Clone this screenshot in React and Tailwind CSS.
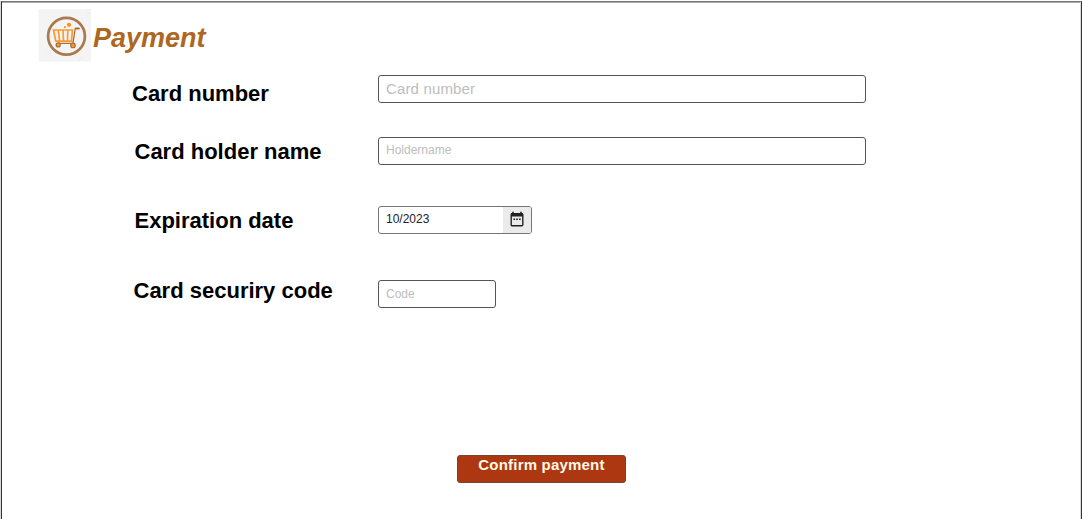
import React from "react";

function CartLogo() {
  return (
    <svg className="block h-[53px] w-[53px] shrink-0" viewBox="0 0 53 53" fill="none" aria-hidden="true">
      <rect x="0.5" width="52.5" height="52.5" fill="#f4f4f4" />
      <path d="M49 6l3-3M9 45l4-4M40 52l4-4M4 12l1-1" stroke="#ebebeb" />
      <circle cx="28.5" cy="27.2" r="18.4" stroke="#aa7a4e" strokeWidth="2.7" />
      <path d="M15.5 21H34.4L33.5 32.2H17.8L15.5 21ZM20.3 21L21.6 32.2M25 21L25.5 32.2M29.8 21L29.5 32.2" stroke="#fb9a32" strokeWidth="1.7" />
      <path d="M41.3 19.5H37.3L34.9 34.3H18.6" stroke="#a9713d" strokeWidth="1.3" />
      <path d="M37.4 19.5H41.6" stroke="#ad672b" strokeWidth="1.6" />
      <circle cx="20.2" cy="35.9" r="2" fill="#f7a11e" stroke="#a9713d" strokeWidth="1.3" />
      <circle cx="35" cy="36.4" r="2.2" fill="#f7a11e" stroke="#a9713d" strokeWidth="1.3" />
      <circle cx="31" cy="15.8" r="2.1" fill="#fb921b" />
      <circle cx="26.9" cy="18.1" r="1.1" fill="#fb921b" />
    </svg>
  );
}

function CalendarIcon() {
  return (
    <svg className="mb-[2px] block h-4 w-[14px]" viewBox="0 0 14 16" fill="none" aria-hidden="true">
      <path d="M3 .7v3M11 .7v3" stroke="#222" strokeWidth="1.6" />
      <rect x="1.2" y="2.6" width="11.6" height="12.1" rx="1" stroke="#222" strokeWidth="1.4" />
      <path d="M1 2.3h12v3.2H1z" fill="#222" />
      <path d="M3.4 8.3h1.7M6.2 8.3h1.7M9 8.3h1.7" stroke="#222" strokeWidth="1.4" />
    </svg>
  );
}

const field =
  "block h-7 rounded-[3px] border border-[#555] bg-white pl-[7px] outline-none placeholder:text-[#bdbdbd] placeholder:opacity-100";
const label = "shrink-0 text-[22px] font-bold leading-7 text-black";

export default function App() {
  return (
    <div className="h-[519px] w-full overflow-hidden bg-white pl-px pr-px pt-px font-['Liberation_Sans',Arial,sans-serif]">
      <main className="flex h-[518px] flex-col border-x border-t border-x-[#333] border-t-[#777] shadow-[-1px_0_0_#d8d8d8,inset_-1px_0_0_#dcdcdc,inset_0_1px_0_#aaa]">
        <header className="flex h-[60px] shrink-0 pl-[36px] pt-[7px]">
          <CartLogo />
          <h1 className="ml-[2px] mt-[13px] text-[27px] font-bold italic leading-8 text-[#ad671f]">Payment</h1>
        </header>

        <form className="flex grow flex-col" onSubmit={(e) => e.preventDefault()}>
          <div className="mt-[13px] flex h-[33px] items-start">
            <label htmlFor="number" className={label + " ml-[130px] mt-[5px] w-[246px]"}>Card number</label>
            <input id="number" placeholder="Card number" className={field + " w-[488px] pb-[2px] text-[15px] tracking-[0.15px]"} />
          </div>
          <div className="mt-[29px] flex h-[33px] items-start">
            <label htmlFor="holder" className={label + " ml-[132.5px] mt-px w-[243.5px]"}>Card holder name</label>
            <input id="holder" placeholder="Holdername" className={field + " w-[488px] pb-[2px] text-[12px]"} />
          </div>
          <div className="mt-[36px] flex h-[33px] items-start">
            <label htmlFor="expiry" className={label + " ml-[132.5px] mt-px w-[243.5px]"}>Expiration date</label>
            <div className="flex h-7 w-[154px] overflow-hidden rounded-[3px] border border-[#777] bg-white">
              <input id="expiry" defaultValue="10/2023" className="block h-full w-[124px] pb-[2px] pl-[7px] text-[12px] text-[#222] outline-none" />
              <button type="button" aria-label="Choose date" className="flex h-full w-[28px] items-center justify-center bg-[#ebebeb]">
                <CalendarIcon />
              </button>
            </div>
          </div>
          <div className="mt-[38px] flex h-[33px] items-start">
            <label htmlFor="code" className={label + " ml-[131.5px] w-[244.5px]"}>Card securiry code</label>
            <input id="code" placeholder="Code" className={field + " mt-[3px] w-[118px] text-[12px]"} />
          </div>
          <button type="submit" className="ml-[455px] mt-[145px] flex h-7 w-[169px] justify-center rounded-[3px] border border-[#74452f] bg-[#ad3710] text-[15px] font-bold leading-[18px] tracking-[0.2px] text-[#fff9e5]">
            Confirm payment
          </button>
        </form>
      </main>
    </div>
  );
}
